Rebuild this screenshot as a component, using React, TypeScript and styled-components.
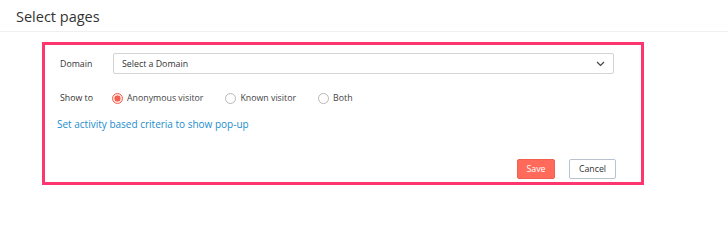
import React, { useState } from 'react'
import styled, { createGlobalStyle } from 'styled-components'

const GlobalStyle = createGlobalStyle`
  body {
    margin: 0;
    background: #ffffff;
    font-family: 'Open Sans', 'Liberation Sans', sans-serif;
    color: #333;
  }
`

type Audience = 'anonymous' | 'known' | 'both'

const audiences: { id: Audience; label: string }[] = [
  { id: 'anonymous', label: 'Anonymous visitor' },
  { id: 'known', label: 'Known visitor' },
  { id: 'both', label: 'Both' },
]

const App = () => {
  const [audience, setAudience] = useState<Audience>('anonymous')
  return (
    <>
      <GlobalStyle />
      <Header>
        <Title>Select pages</Title>
      </Header>
      <Panel>
        <Row>
          <Label>Domain</Label>
          <Select>
            <span>Select a Domain</span>
            <svg width="9" height="6" viewBox="0 0 9 6">
              <path d="M1 1l3.5 3.5L8 1" fill="none" stroke="#444" strokeWidth="1.2" />
            </svg>
          </Select>
        </Row>
        <RadioRow>
          <Label>Show to</Label>
          <Options>
            {audiences.map(a => (
              <Option key={a.id} onClick={() => setAudience(a.id)}>
                <Radio checked={audience === a.id} />
                {a.label}
              </Option>
            ))}
          </Options>
        </RadioRow>
        <CriteriaLink href="#">Set activity based criteria to show pop-up</CriteriaLink>
        <Footer>
          <SaveButton>Save</SaveButton>
          <CancelButton>Cancel</CancelButton>
        </Footer>
      </Panel>
    </>
  )
}

const Header = styled.div`
  height: 31px;
  box-sizing: content-box;
  padding-left: 16px;
  border-bottom: 1px solid #f0f0f0;
`
const Title = styled.h1`
  margin: 0;
  padding-top: 7px;
  font-size: 14.5px;
  font-weight: 400;
  color: #333;
  line-height: 20px;
`
const Panel = styled.div`
  box-sizing: border-box;
  margin: 10px 0 0 42px;
  width: 602px;
  height: 143px;
  border: 3px solid #fd3670;
  padding: 8px 27px 3px 12px;
  display: flex;
  flex-direction: column;
`
const Row = styled.div`
  display: flex;
  align-items: center;
  height: 21px;
`
const RadioRow = styled(Row)`
  margin-top: 14px;
  height: 20px;
`
const Label = styled.div`
  width: 56px;
  padding-left: 3px;
  box-sizing: border-box;
  font-size: 8.8px;
  color: #333;
  flex-shrink: 0;
`
const Select = styled.div`
  flex: 1;
  height: 21px;
  box-sizing: border-box;
  border: 1px solid #d4d4d4;
  border-radius: 2px;
  padding: 0 8px;
  display: flex;
  align-items: center;
  justify-content: space-between;
  font-size: 8.8px;
  color: #333;
`
const Options = styled.div`
  display: flex;
  align-items: center;
  gap: 22px;
  margin-left: -1px;
`
const Option = styled.label`
  display: flex;
  align-items: center;
  gap: 4px;
  font-size: 8.8px;
  color: #444;
  cursor: pointer;
`
const Radio = styled.span<{ checked: boolean }>`
  box-sizing: border-box;
  width: 11px;
  height: 11px;
  border-radius: 50%;
  border: 1px solid ${p => (p.checked ? '#f3604f' : '#b8b8b8')};
  background: ${p => (p.checked ? 'radial-gradient(circle, #f3604f 0 2.8px, #fde3df 3.3px)' : '#fff')};
`
const CriteriaLink = styled.a`
  margin-top: 8px;
  height: 16px;
  line-height: 16px;
  font-size: 10px;
  color: #1b8dcc;
  text-decoration: none;
  align-self: flex-start;
`
const Footer = styled.div`
  margin-top: 27px;
  margin-right: -2px;
  display: flex;
  justify-content: flex-end;
  gap: 14px;
`
const ButtonBase = styled.button`
  height: 20px;
  box-sizing: border-box;
  border-radius: 2px;
  font-family: 'Open Sans', 'Liberation Sans', sans-serif;
  font-size: 8.8px;
  padding: 0;
  cursor: pointer;
`
const SaveButton = styled(ButtonBase)`
  width: 38px;
  background: #ff6a5b;
  border: 1px solid #f3604f;
  color: #fff;
`
const CancelButton = styled(ButtonBase)`
  width: 47px;
  background: #fff;
  border: 1px solid #b9c3cd;
  color: #333;
`

export default App
